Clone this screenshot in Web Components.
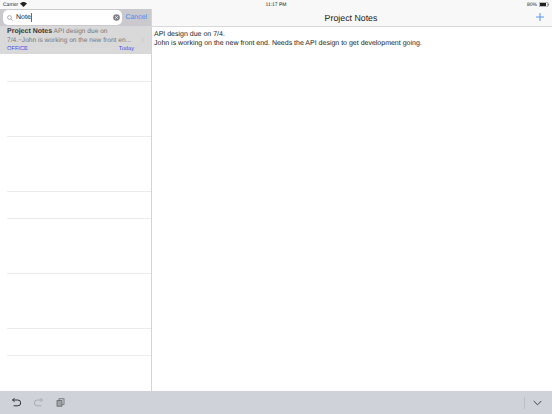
<!DOCTYPE html>
<html>
<head>
<meta charset="utf-8">
<style>
html, body { margin: 0; height: 100%; }
body { font-family: "Liberation Sans", Arial, sans-serif; overflow: hidden; text-rendering: geometricPrecision; }
notes-app { width: 552px; height: 414px; }
</style>
</head>
<body>
<notes-app></notes-app>
<script>
// Status bar across the top of the screen
class StatusBar extends HTMLElement {
    constructor() {
        super();
        this.attachShadow({ mode: "open" });
        this.shadowRoot.innerHTML = `
            <style>
                :host { display: grid; grid-template-columns: 1fr auto 1fr; align-items: center; height: 9px; font-size: 5px; color: #222; padding: 0 3px 0 3px; }
                .left { display: flex; align-items: center; gap: 2px; }
                .right { display: flex; align-items: center; justify-content: flex-end; gap: 2px; }
                .batt { display: block; }
            </style>
            <div class="left">Carrier
                <svg width="7" height="5" viewBox="0 0 7 5"><path d="M3.5 5 0 1.6C2 -.5 5 -.5 7 1.6Z" fill="#222"/></svg>
            </div>
            <div>11:17 PM</div>
            <div class="right">80%
                <svg class="batt" width="10" height="5" viewBox="0 0 10 5"><rect x=".25" y=".25" width="8.5" height="4.5" rx="1" fill="none" stroke="#555" stroke-width=".5"/><rect x="1" y="1" width="6" height="3" fill="#222"/><rect x="9.2" y="1.6" width=".7" height="1.8" fill="#555"/></svg>
            </div>
        `;
    }
}

// Search field with cancel button
class SearchBar extends HTMLElement {
    constructor() {
        super();
        this.attachShadow({ mode: "open" });
        this.shadowRoot.innerHTML = `
            <style>
                :host { display: flex; align-items: center; height: 17px; background: #c9c9ce; padding: 0 4px 0 3px; gap: 4px; }
                .field { flex: 1; height: 15px; background: #fff; border-radius: 5px; display: flex; align-items: center; padding: 0 2px 0 4px; gap: 3px; font-size: 7px; color: #222; }
                .text { flex: 1; display: flex; align-items: center; }
                .caret { width: 1px; height: 9px; background: #2f6fe0; }
                .cancel { font-size: 6.9px; color: #3f88ee; }
            </style>
            <div class="field">
                <svg width="6" height="6" viewBox="0 0 6 6"><circle cx="2.5" cy="2.5" r="1.9" fill="none" stroke="#8e8e93" stroke-width=".7"/><path d="M4 4 5.7 5.7" stroke="#8e8e93" stroke-width=".7"/></svg>
                <div class="text">Note<span class="caret"></span></div>
                <svg width="7" height="7" viewBox="0 0 7 7"><circle cx="3.5" cy="3.5" r="3.3" fill="#808085"/><path d="M2.1 2.1 4.9 4.9M4.9 2.1 2.1 4.9" stroke="#fff" stroke-width=".7"/></svg>
            </div>
            <div class="cancel">Cancel</div>
        `;
    }
}

// One search result in the list
class NoteRow extends HTMLElement {
    constructor() {
        super();
        this.attachShadow({ mode: "open" });
        this.shadowRoot.innerHTML = `
            <style>
                :host { display: block; height: 28px; box-sizing: border-box; background: #d9d9d9; padding: 1px 7px 0 7px; position: relative; font-size: 6.6px; line-height: 9px; color: #77777c; }
                .line { white-space: nowrap; overflow: hidden; }
                b { color: #333; font-size: 7px; }
                .foot { display: flex; justify-content: space-between; padding-right: 10px; font-size: 5.7px; line-height: 9px; color: #3d52e6; }
                .chev { position: absolute; right: 7px; top: 11px; }
            </style>
            <div class="line"><b>Project Notes</b> API design due on</div>
            <div class="line">7/4.~John is working on the new front en...</div>
            <div class="foot"><span>OFFICE</span><span>Today</span></div>
            <svg class="chev" width="3" height="6" viewBox="0 0 3 6"><path d="M.5.5 2.5 3 .5 5.5" fill="none" stroke="#c4c4c8" stroke-width=".7"/></svg>
        `;
    }
}

// Empty ruled rows under the result
class RuledList extends HTMLElement {
    constructor() {
        super();
        this.attachShadow({ mode: "open" });
        const heights = [28, 55, 55, 27, 55, 55, 27];
        this.shadowRoot.innerHTML = `
            <style>
                :host { display: block; flex: 1; background: #fff; }
                div { box-sizing: border-box; margin-left: 7px; border-bottom: 1px solid #ececec; }
            </style>
            ${heights.map(h => `<div style="height:${h}px"></div>`).join("")}
        `;
    }
}

// Title bar of the detail pane
class DetailHeader extends HTMLElement {
    constructor() {
        super();
        this.attachShadow({ mode: "open" });
        this.shadowRoot.innerHTML = `
            <style>
                :host { display: flex; align-items: center; justify-content: center; height: 18px; box-sizing: border-box; padding-right: 2px; position: relative; background: #f8f8f8; border-bottom: 1px solid #d8d8d8; font-size: 8.8px; color: #222; }
                svg { position: absolute; right: 8px; top: 4px; }
            </style>
            <slot></slot>
            <svg width="8" height="8" viewBox="0 0 8 8"><path d="M4 0V8M0 4H8" stroke="#5b9bf0" stroke-width="1.1"/></svg>
        `;
    }
}

// Bottom toolbar with undo, redo, copy and collapse
class BottomBar extends HTMLElement {
    constructor() {
        super();
        this.attachShadow({ mode: "open" });
        this.shadowRoot.innerHTML = `
            <style>
                :host { display: flex; align-items: center; height: 23px; background: #cfd2d9; padding: 0 10px 0 12px; gap: 13px; }
                .sp { flex: 1; }
                .sep { width: 1px; height: 12px; background: #bcc0c6; margin-right: -5px; }
            </style>
            <svg width="9" height="9" viewBox="0 0 9 9"><path d="M2.6 .4 .4 2 2.6 3.6M.8 2H5.8A2.9 2.9 0 0 1 5.8 7.8H1.5" fill="none" stroke="#222" stroke-width=".9"/></svg>
            <svg width="9" height="9" viewBox="0 0 9 9"><path d="M6.4 .4 8.6 2 6.4 3.6M8.2 2H3.2A2.9 2.9 0 0 0 3.2 7.8H7.5" fill="none" stroke="#a4a8ae" stroke-width=".9"/></svg>
            <svg width="9" height="9" viewBox="0 0 9 9"><rect x="3" y=".8" width="5" height="5.5" fill="none" stroke="#666" stroke-width=".8"/><rect x="1" y="2.6" width="5" height="5.6" fill="#9ea2a8" stroke="#666" stroke-width=".8"/></svg>
            <div class="sp"></div>
            <div class="sep"></div>
            <svg width="9" height="6" viewBox="0 0 9 6"><path d="M.7 1 4.5 4.8 8.3 1" fill="none" stroke="#333" stroke-width=".9"/></svg>
        `;
    }
}

// The whole screen
class NotesApp extends HTMLElement {
    constructor() {
        super();
        this.attachShadow({ mode: "open" });
        this.shadowRoot.innerHTML = `
            <style>
                :host { display: flex; flex-direction: column; background: #f8f8f8; }
                .main { flex: 1; display: flex; min-height: 0; }
                .side { width: 151px; border-right: 1px solid #d4d4d4; display: flex; flex-direction: column; background: #fff; }
                .detail { flex: 1; display: flex; flex-direction: column; background: #fff; }
                .body { padding: 3px 2px; font-size: 7px; line-height: 9px; color: #222; }
            </style>
            <status-bar></status-bar>
            <div class="main">
                <div class="side">
                    <search-bar></search-bar>
                    <note-row></note-row>
                    <ruled-list></ruled-list>
                </div>
                <div class="detail">
                    <detail-header>Project Notes</detail-header>
                    <div class="body">API design due on 7/4.<br>John is working on the new front end. Needs the API design to get development going.</div>
                </div>
            </div>
            <bottom-bar></bottom-bar>
        `;
    }
}

customElements.define("status-bar", StatusBar);
customElements.define("search-bar", SearchBar);
customElements.define("note-row", NoteRow);
customElements.define("ruled-list", RuledList);
customElements.define("detail-header", DetailHeader);
customElements.define("bottom-bar", BottomBar);
customElements.define("notes-app", NotesApp);
</script>
</body>
</html>
